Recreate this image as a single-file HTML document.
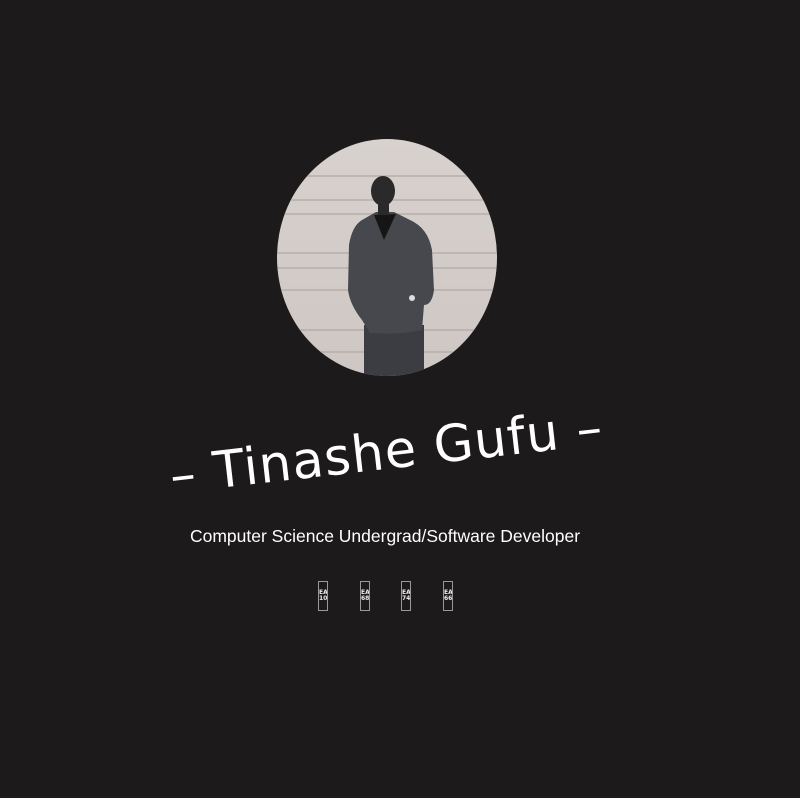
<!DOCTYPE html>
<html><head><style>
html,body{margin:0;padding:0;width:800px;height:798px;overflow:hidden;background:#1c1a1a;}
.t{position:absolute;left:0;width:800px;text-align:center;color:#fff;}
.title{top:420px;font-family:"Comic Sans MS","DejaVu Sans",sans-serif;font-size:51px;transform:rotate(-6.5deg);transform-origin:400px 450px;left:-14px;letter-spacing:1px;}
.sub{top:526px;font-family:"Liberation Sans",sans-serif;font-size:17.5px;left:-15px;}
.ic{position:absolute;top:581px;width:10px;height:30px;border:1.5px solid #999;box-sizing:border-box;color:#eee;font:bold 6px/6px "DejaVu Sans",sans-serif;text-align:center;padding-top:8px;overflow:hidden;}
</style></head><body>
<svg style="position:absolute;left:0;top:0" width="800" height="798">
<defs><clipPath id="c"><ellipse cx="387" cy="257.5" rx="110" ry="118.5"/></clipPath>
<linearGradient id="g" x1="0" y1="0" x2="0" y2="1"><stop offset="0" stop-color="#d8d2cf"/><stop offset="1" stop-color="#cdc6c3"/></linearGradient></defs>
<g clip-path="url(#c)">
<rect x="270" y="135" width="240" height="250" fill="url(#g)"/>
<g stroke="#b7aeaa" stroke-width="1.5">
<line x1="270" y1="176" x2="500" y2="176"/><line x1="270" y1="200" x2="500" y2="200"/>
<line x1="270" y1="214" x2="500" y2="214"/><line x1="270" y1="253" x2="500" y2="253"/>
<line x1="270" y1="268" x2="500" y2="268"/><line x1="270" y1="290" x2="500" y2="290"/>
<line x1="270" y1="330" x2="500" y2="330"/><line x1="270" y1="352" x2="500" y2="352"/>
</g>
<rect x="364" y="325" width="60" height="55" fill="#3c3d42"/>
<path d="M362 220 L376 212 L394 212 L410 220 Q428 228 432 250 L434 290 Q432 305 424 305 L422 330 Q400 335 370 333 L362 320 Q350 305 348 290 L349 245 Q352 226 362 220Z" fill="#47484d"/>
<path d="M374 215 L384 240 L396 214Z" fill="#151515"/>
<ellipse cx="383" cy="191" rx="12" ry="15" fill="#2a2a2a"/>
<rect x="378" y="203" width="11" height="12" fill="#2a2a2a"/>
<circle cx="412" cy="298" r="3" fill="#ddd"/>
</g>
</svg>
<div class="t title" style="left:34px">– Tinashe Gufu –</div>
<div class="t sub">Computer Science Undergrad/Software Developer</div>
<div class="ic" style="left:318px">EA 10</div>
<div class="ic" style="left:360px">EA 68</div>
<div class="ic" style="left:401px">EA 74</div>
<div class="ic" style="left:443px">EA 66</div>
</body></html>
